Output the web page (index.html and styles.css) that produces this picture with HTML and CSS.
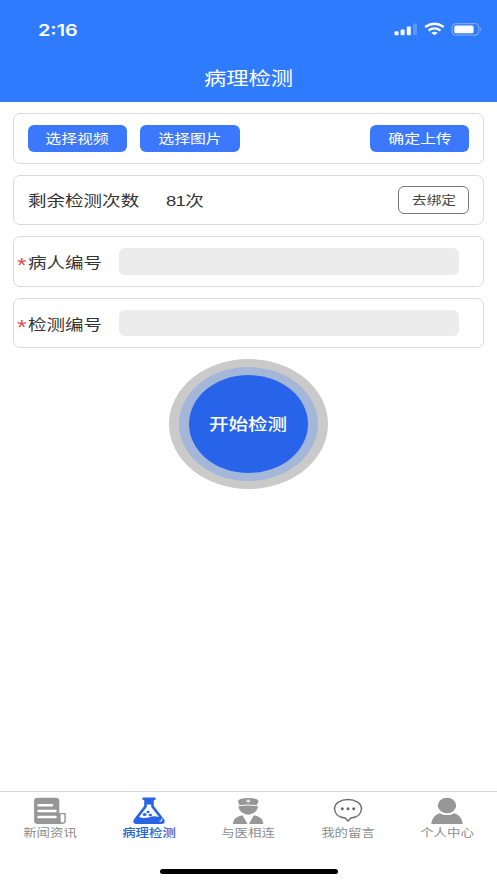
FILE: index.html
```html
<!DOCTYPE html>
<html lang="zh-CN">
<head>
<meta charset="utf-8">
<title>病理检测</title>
<link rel="stylesheet" href="styles.css">
</head>
<body>
<div class="app">
  <header class="header">
    <div class="status">
      <span class="time">2:16</span>
      <svg class="status-icons" width="90" height="16" viewBox="0 0 90 16">
        <g fill="#fff">
          <rect x="1.500" y="9.300" width="4" height="4" rx="1"/>
          <rect x="7.600" y="7.600" width="4" height="5.700" rx="1"/>
          <rect x="13.800" y="4.600" width="4" height="8.700" rx="1"/>
          <rect x="20" y="1.600" width="4" height="11.700" rx="1" opacity=".22"/>
        </g>
        <g fill="none" stroke="#fff" stroke-width="2.300">
          <path d="M32.200 5Q41.500 -1.500 50.800 5"/>
          <path d="M35.600 8.500Q41.500 4.300 47.400 8.500"/>
        </g>
        <path d="M38.300 10.700Q41.500 8.700 44.700 10.700L41.500 13.300Z" fill="#fff"/>
        <rect x="59.200" y="1.700" width="26.600" height="11.400" rx="3.300" fill="none" stroke="#fff" stroke-opacity=".42"/>
        <rect x="61.300" y="3.500" width="19.300" height="7.800" rx="1.600" fill="#fff"/>
        <path d="M87.300 5.500Q89.500 7.400 87.300 9.300Z" fill="#fff" opacity=".45"/>
      </svg>
    </div>
    <h1 class="title"><span class="wide">病理检测</span></h1>
  </header>

  <main class="content">
    <section class="card actions">
      <button class="btn"><span class="wide">选择视频</span></button>
      <button class="btn"><span class="wide">选择图片</span></button>
      <button class="btn push"><span class="wide">确定上传</span></button>
    </section>
    <section class="card quota">
      <span class="quota-label wide-left">剩余检测次数</span>
      <span class="quota-value wide-left">81次</span>
      <button class="btn-outline push"><span class="wide">去绑定</span></button>
    </section>
    <section class="card field">
      <span class="required wide-left">*</span>
      <label class="field-label wide-left" for="patient">病人编号</label>
      <input class="input" id="patient" type="text">
    </section>
    <section class="card field">
      <span class="required wide-left">*</span>
      <label class="field-label wide-left" for="test">检测编号</label>
      <input class="input" id="test" type="text">
    </section>
    <button class="start"><span class="start-mid"><span class="start-core"><span class="wide">开始检测</span></span></span></button>
  </main>

  <nav class="tabs">
    <a class="tab">
      <svg width="34" height="28" viewBox="0 0 34 28">
        <path d="M4.500 .8H22.500Q26.300 .8 26.300 4V16H32.800V24Q32.800 27 29 27H5Q1.100 27 1.100 23.500V4Q1.100 .8 4.500 .8Z" fill="#979797"/>
        <path d="M27.600 17.300H31.300V24Q31.300 25.500 29.500 25.500T27.600 24Z" fill="#fff"/>
        <path d="M5.500 8.200H19M5.500 14H22.500M5.500 20H22.500" stroke="#fff" stroke-width="2.500" stroke-linecap="round"/>
      </svg>
      <span class="wide">新闻资讯</span>
    </a>
    <a class="tab active">
      <svg width="34" height="28" viewBox="0 0 34 28">
        <path d="M11.500 1.800H22.500" stroke="#2864e4" stroke-width="2.400" stroke-linecap="round"/>
        <path d="M12.200 2.500H21.800V9L32.200 22.500Q34 27 29 27H5Q0 27 1.800 22.500L12.200 9Z" fill="#2864e4"/>
        <path d="M14.800 7.500H19.200V10L27 20Q22 18.600 17 20.300T7 20L14.800 10Z" fill="#fff"/>
        <g fill="#2864e4"><ellipse cx="12.700" cy="17.600" rx="1.900" ry="1.500"/><ellipse cx="16" cy="15" rx="1.500" ry="1.200"/><ellipse cx="18.300" cy="18" rx="1.700" ry="1.300"/></g>
        <path d="M27.700 24.500Q30.500 24 29.700 21.500" fill="none" stroke="#fff" stroke-width="1.100"/>
      </svg>
      <span class="wide">病理检测</span>
    </a>
    <a class="tab">
      <svg width="34" height="28" viewBox="0 0 34 28">
        <g fill="#979797">
          <path d="M6.800 4Q8.500 1 17.200 .9T27.600 4L25.800 8.200Q17 6.600 8.500 8.200Z"/>
          <path d="M7.400 9.300Q17 7.700 27 9.300Q26.500 14 22 16.300Q17.200 19 12.300 16.300Q7.800 14 7.400 9.300Z"/>
          <path d="M11.500 18.200L16.500 27H2Q1.500 20 11.500 18.200ZM22.800 18.200L18 27H32.300Q32.800 20 22.800 18.200Z"/>
        </g>
        <path d="M17.200 2.300V5.700M15 4H19.400" stroke="#fff" stroke-width="1"/>
      </svg>
      <span class="wide">与医相连</span>
    </a>
    <a class="tab">
      <svg width="34" height="28" viewBox="0 0 34 28">
        <path d="M14 20.900C7.500 20.200 3.500 16.500 3.500 11.700C3.500 6.300 9.500 2.500 17 2.500S30.500 6.300 30.500 11.700C30.500 16.500 26.500 20.200 20 20.900L17 24Z" fill="none" stroke="#6d6d6d" stroke-width="1.500"/>
        <g fill="#666"><circle cx="11.300" cy="11.700" r="1.500"/><circle cx="17" cy="11.700" r="1.500"/><circle cx="22.700" cy="11.700" r="1.500"/></g>
      </svg>
      <span class="wide">我的留言</span>
    </a>
    <a class="tab">
      <svg width="34" height="28" viewBox="0 0 34 28">
        <g fill="#979797"><ellipse cx="17" cy="8.500" rx="9.200" ry="7.700"/><path d="M9.500 16.200Q17 20 24.500 16.200Q31.500 18.200 32.800 27H1.200Q2.500 18.200 9.500 16.200Z"/></g>
      </svg>
      <span class="wide">个人中心</span>
    </a>
  </nav>
  <div class="home"><div class="home-bar"></div></div>
</div>
</body>
</html>
```
FILE: styles.css
```css
* { box-sizing: border-box; }
body {
  margin: 0;
  background: #fff;
  font-family: "Liberation Sans", "Noto Sans CJK SC", sans-serif;
  color: #333;
}
button {
  font-family: inherit;
  padding: 0;
  border: 0;
}
.app {
  height: 883px;
  display: flex;
  flex-direction: column;
}
/* Labels are set in an extended width. */
.wide, .wide-left {
  display: inline-block;
  white-space: nowrap;
  transform: scaleX(1.22);
}
.wide-left { transform-origin: left center; }

.header {
  height: 102px;
  background: #2e7bfe;
  color: #fff;
}
.status {
  height: 60px;
  padding: 0 14px 0 37.500px;
  display: flex;
  align-items: center;
  justify-content: space-between;
}
.time {
  font: 600 16px/20px Inter, sans-serif;
  transform: scaleX(1.24);
  transform-origin: left center;
}
.title {
  margin: 0;
  font-size: 18.300px;
  font-weight: 400;
  line-height: 38px;
  text-align: center;
}
.content {
  flex: 1;
  display: flex;
  flex-direction: column;
  gap: 11px;
  padding: 11px 13.300px 0;
}
.card {
  height: 50.600px;
  border: 1.400px solid #dadada;
  border-radius: 7px;
  display: flex;
  align-items: center;
  padding: 0 13.300px;
}
.actions { gap: 12.700px; }
.push { margin-left: auto; }
.btn {
  width: 99.700px;
  height: 27px;
  padding-bottom: 2px;
  border-radius: 6px;
  background: #3b78fc;
  color: #fff;
  font-size: 13px;
}
.btn-outline {
  width: 71px;
  height: 28px;
  padding-bottom: 1px;
  border: 1px solid #777;
  border-radius: 6px;
  background: #fff;
  color: #444;
  font-size: 12px;
}
.quota-label, .quota-value, .field-label {
  font-size: 15.200px;
  padding-bottom: 1px;
}
.quota-label { width: 138px; }
.quota-value { letter-spacing: -.6px; }
.field { padding-left: 3px; }
.required {
  width: 11px;
  color: #e5484d;
  font-size: 20px;
  line-height: 20px;
  padding-top: 7px;
}
.field-label { width: 91px; }
.input {
  width: 339.500px;
  height: 26.500px;
  padding: 0 10px;
  border: 0;
  border-radius: 6px;
  background: #ececec;
}
.start {
  width: 159px;
  height: 130px;
  align-self: center;
  border-radius: 50%;
  background: #cacaca;
  display: flex;
  align-items: center;
  justify-content: center;
}
.start-mid, .start-core {
  display: flex;
  align-items: center;
  justify-content: center;
  border-radius: 50%;
}
.start-mid {
  width: 139px;
  height: 114px;
  background: #a5b7d9;
}
.start-core {
  width: 119px;
  height: 98px;
  padding-bottom: 2px;
  background: #2764ea;
  color: #fff;
  font-size: 16px;
  font-weight: 500;
}
.tabs {
  height: 63px;
  border-top: 1.500px solid #d8d8d8;
  display: grid;
  grid-template-columns: repeat(5, 1fr);
}
.tab {
  display: flex;
  flex-direction: column;
  align-items: center;
  padding-top: 5px;
  color: #8e8e8e;
  font-size: 11px;
  line-height: 16px;
}
.active {
  color: #2864ce;
  font-weight: 500;
}
.home {
  height: 29px;
  padding-top: 15px;
}
.home-bar {
  width: 178px;
  height: 5px;
  margin: 0 auto;
  border-radius: 3px;
  background: #000;
}
```
